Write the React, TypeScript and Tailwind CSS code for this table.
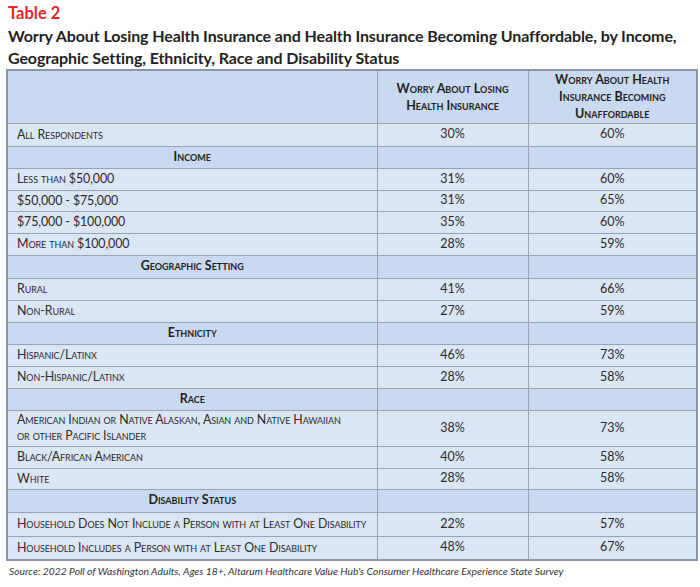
type Row =
  | { kind: 'section'; label: string; h: string }
  | { kind: 'data'; label: React.ReactNode; a: string; b: string; h: string };

const rows: Row[] = [
  { kind: 'data', label: 'All Respondents', a: '30%', b: '60%', h: 'h-[23px]' },
  { kind: 'section', label: 'Income', h: 'h-[22px]' },
  { kind: 'data', label: 'Less than $50,000', a: '31%', b: '60%', h: 'h-[22px]' },
  { kind: 'data', label: '$50,000 - $75,000', a: '31%', b: '65%', h: 'h-[21px]' },
  { kind: 'data', label: '$75,000 - $100,000', a: '35%', b: '60%', h: 'h-[22px]' },
  { kind: 'data', label: 'More than $100,000', a: '28%', b: '59%', h: 'h-[22px]' },
  { kind: 'section', label: 'Geographic Setting', h: 'h-[23px]' },
  { kind: 'data', label: 'Rural', a: '41%', b: '66%', h: 'h-[22px]' },
  { kind: 'data', label: 'Non-Rural', a: '27%', b: '59%', h: 'h-[22px]' },
  { kind: 'section', label: 'Ethnicity', h: 'h-[22px]' },
  { kind: 'data', label: 'Hispanic/Latinx', a: '46%', b: '73%', h: 'h-[22px]' },
  { kind: 'data', label: 'Non-Hispanic/Latinx', a: '28%', b: '58%', h: 'h-[22px]' },
  { kind: 'section', label: 'Race', h: 'h-[22px]' },
  {
    kind: 'data',
    label: (
      <>
        American Indian or Native Alaskan, Asian and Native Hawaiian
        <br />
        or other Pacific Islander
      </>
    ),
    a: '38%',
    b: '73%',
    h: 'h-[36px]',
  },
  { kind: 'data', label: 'Black/African American', a: '40%', b: '58%', h: 'h-[22px]' },
  { kind: 'data', label: 'White', a: '28%', b: '58%', h: 'h-[21px]' },
  { kind: 'section', label: 'Disability Status', h: 'h-[23px]' },
  {
    kind: 'data',
    label: 'Household Does Not Include a Person with at Least One Disability',
    a: '22%',
    b: '57%',
    h: 'h-[24px]',
  },
  {
    kind: 'data',
    label: 'Household Includes a Person with at Least One Disability',
    a: '48%',
    b: '67%',
    h: 'h-[24px]',
  },
];

const cell = 'border border-[#97a3b4] p-0';

export default function App() {
  return (
    <div className="w-[700px] h-[587px] bg-white font-['Lato',_'Liberation_Sans',_sans-serif] text-[#231f20]">
      <div className="pl-[8px] pt-[2px]">
        <div className="text-[16.5px] leading-[22px] font-bold text-[#e5262c]">Table 2</div>
        <div className="text-[16px] leading-[22px] font-bold tracking-[-0.1px] mt-[1px]">
          Worry About Losing Health Insurance and Health Insurance Becoming Unaffordable, by Income,
          <br />
          Geographic Setting, Ethnicity, Race and Disability Status
        </div>
      </div>
      <table className="ml-[6px] mt-0 w-[690px] border-collapse border-2 border-[#8c96a3] table-fixed">
        <colgroup>
          <col className="w-[370px]" />
          <col className="w-[151px]" />
          <col className="w-[169px]" />
        </colgroup>
        <thead>
          <tr className="h-[53px] bg-[#c9d9ef]">
            <th className={cell}></th>
            <th className={`${cell} text-center font-bold text-[12.5px] leading-[17px] [font-variant:small-caps] pt-[1px]`}>
              Worry About Losing
              <br />
              Health Insurance
            </th>
            <th className={`${cell} text-center font-bold text-[12.5px] leading-[17px] [font-variant:small-caps]`}>
              Worry About Health
              <br />
              Insurance Becoming
              <br />
              Unaffordable
            </th>
          </tr>
        </thead>
        <tbody>
          {rows.map((r, i) =>
            r.kind === 'section' ? (
              <tr key={i} className={`${r.h} bg-[#c9d9ef]`}>
                <td className={`${cell} text-center font-bold text-[12.5px] [font-variant:small-caps]`}>
                  {r.label}
                </td>
                <td className={cell}></td>
                <td className={cell}></td>
              </tr>
            ) : (
              <tr key={i} className={`${r.h} bg-[#dbe6f4] text-[12.5px]`}>
                <td className={`${cell} pl-[9px] leading-[16px] whitespace-nowrap text-[12.4px] tracking-[-0.1px] [font-variant:small-caps] text-[#2b2b2b]`}>
                  {r.label}
                </td>
                <td className={`${cell} text-center text-[#2b2b2b]`}>{r.a}</td>
                <td className={`${cell} text-center text-[#2b2b2b]`}>{r.b}</td>
              </tr>
            )
          )}
        </tbody>
      </table>
      <div className="pl-[9px] pt-[3px] text-[10.3px] italic text-[#333]">
        Source: 2022 Poll of Washington Adults, Ages 18+, Altarum Healthcare Value Hub's Consumer Healthcare Experience State Survey
      </div>
    </div>
  );
}
